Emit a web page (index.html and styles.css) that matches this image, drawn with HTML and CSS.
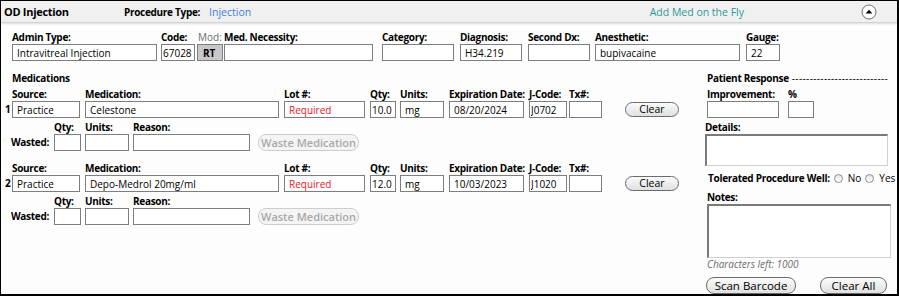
FILE: index.html
```html
<!DOCTYPE html>
<html lang="en">
<head>
    <meta charset="UTF-8">
    <title>OD Injection</title>
    <link rel="stylesheet" href="styles.css">
</head>
<body>
    <div class="panel">
        <div class="panel-head">
            <span class="head-title">OD Injection</span>
            <span class="head-label">Procedure Type:</span>
            <span class="head-type">Injection</span>
            <span class="head-add">Add Med on the Fly</span>
            <button class="collapse-btn" title="Collapse">
                <svg width="16" height="16" viewBox="0 0 16 16">
                    <circle cx="8" cy="8" r="7" fill="#fff" stroke="#6f6f6f" stroke-width="1"/>
                    <path d="M4.6 9.6 L8 5.8 L11.4 9.6 Z" fill="#000"/>
                </svg>
            </button>
        </div>

        <div class="panel-body">
            <div class="top-row">
                <div class="field f-admin"><label>Admin Type:</label><input class="box" value="Intravitreal Injection"></div>
                <div class="field f-code"><label>Code:</label><input class="box tight" value="67028"></div>
                <div class="field f-mod"><label class="muted">Mod:</label><input class="box mod-box" value="RT"></div>
                <div class="field f-need"><label>Med. Necessity:</label><input class="box" value=""></div>
                <div class="field f-cat"><label>Category:</label><input class="box" value=""></div>
                <div class="field f-dx"><label>Diagnosis:</label><input class="box" value="H34.219"></div>
                <div class="field f-dx2"><label>Second Dx:</label><input class="box" value=""></div>
                <div class="field f-anes"><label>Anesthetic:</label><input class="box" value="bupivacaine"></div>
                <div class="field f-gauge"><label>Gauge:</label><input class="box" value="22"></div>
            </div>

            <div class="main">
                <div class="meds">
                    <div class="section-title">Medications</div>

                    <div class="med">
                        <div class="med-row">
                            <span class="med-num">1</span>
                            <div class="field m-src"><label>Source:</label><input class="box" value="Practice"></div>
                            <div class="field m-med"><label>Medication:</label><input class="box" value="Celestone"></div>
                            <div class="field m-lot"><label>Lot #:</label><input class="box required" value="Required"></div>
                            <div class="field m-qty"><label>Qty:</label><input class="box tight" value="10.0"></div>
                            <div class="field m-units"><label>Units:</label><input class="box" value="mg"></div>
                            <div class="field m-exp"><label>Expiration Date:</label><input class="box" value="08/20/2024"></div>
                            <div class="field m-jcode"><label>J-Code:</label><input class="box tight" value="J0702"></div>
                            <div class="field m-tx"><label>Tx#:</label><input class="box" value=""></div>
                            <button class="pill clear-btn">Clear</button>
                        </div>
                        <div class="waste-row">
                            <span class="waste-label">Wasted:</span>
                            <div class="field w-qty"><label>Qty:</label><input class="box" value=""></div>
                            <div class="field w-units"><label>Units:</label><input class="box" value=""></div>
                            <div class="field w-reason"><label>Reason:</label><input class="box" value=""></div>
                            <button class="pill waste-btn" disabled>Waste Medication</button>
                        </div>
                    </div>

                    <div class="med">
                        <div class="med-row">
                            <span class="med-num">2</span>
                            <div class="field m-src"><label>Source:</label><input class="box" value="Practice"></div>
                            <div class="field m-med"><label>Medication:</label><input class="box" value="Depo-Medrol 20mg/ml"></div>
                            <div class="field m-lot"><label>Lot #:</label><input class="box required" value="Required"></div>
                            <div class="field m-qty"><label>Qty:</label><input class="box tight" value="12.0"></div>
                            <div class="field m-units"><label>Units:</label><input class="box" value="mg"></div>
                            <div class="field m-exp"><label>Expiration Date:</label><input class="box" value="10/03/2023"></div>
                            <div class="field m-jcode"><label>J-Code:</label><input class="box tight" value="J1020"></div>
                            <div class="field m-tx"><label>Tx#:</label><input class="box" value=""></div>
                            <button class="pill clear-btn">Clear</button>
                        </div>
                        <div class="waste-row">
                            <span class="waste-label">Wasted:</span>
                            <div class="field w-qty"><label>Qty:</label><input class="box" value=""></div>
                            <div class="field w-units"><label>Units:</label><input class="box" value=""></div>
                            <div class="field w-reason"><label>Reason:</label><input class="box" value=""></div>
                            <button class="pill waste-btn" disabled>Waste Medication</button>
                        </div>
                    </div>
                </div>

                <div class="response">
                    <div class="resp-title">
                        <span class="resp-label">Patient Response</span>
                        <span class="dashes">---------------------------</span>
                    </div>
                    <div class="imp-row">
                        <div class="field r-imp"><label>Improvement:</label><input class="box" value=""></div>
                        <div class="field r-pct"><label>%</label><input class="box" value=""></div>
                    </div>
                    <div class="field r-details">
                        <label>Details:</label>
                        <textarea class="area details-area"></textarea>
                    </div>
                    <div class="tolerated">
                        <span class="tol-label">Tolerated Procedure Well:</span>
                        <span class="radio"></span><span class="radio-text">No</span>
                        <span class="radio"></span><span class="radio-text">Yes</span>
                    </div>
                    <div class="field r-notes">
                        <label>Notes:</label>
                        <textarea class="area notes-area"></textarea>
                    </div>
                    <div class="chars-left">Characters left: 1000</div>
                    <div class="resp-buttons">
                        <button class="pill big-btn scan-btn">Scan Barcode</button>
                        <button class="pill big-btn clear-all-btn">Clear All</button>
                    </div>
                </div>
            </div>
        </div>
    </div>
</body>
</html>
```

FILE: styles.css
```css
* {
    box-sizing: border-box;
}

body {
    margin: 0;
    font-family: "Open Sans", "Segoe UI", sans-serif;
    font-size: 10px;
    color: #000;
    background: #fff;
}

.panel {
    width: 899px;
    height: 296px;
    border: 1px solid #000;
    border-right-width: 2px;
    border-bottom-width: 2px;
    background: #fdfdfd;
    overflow: hidden;
}

/* bold captions are a touch narrower than Open Sans gives */
.head-label,
.field label,
.section-title,
.med-num,
.waste-label,
.resp-label,
.tol-label {
    font-weight: 700;
    letter-spacing: -0.3px;
}

/* header bar */
.panel-head {
    height: 22px;
    display: flex;
    align-items: center;
    padding-left: 3px;
    background: #f0f0f0;
    border-bottom: 1px solid #d2d2d2;
    box-shadow: 0 1px 2px rgba(0, 0, 0, 0.12);
}

.head-title {
    width: 120px;
    font-size: 11px;
    font-weight: 700;
    letter-spacing: -0.3px;
}

.head-label {
    margin-right: 9px;
}

.head-type {
    font-size: 10.5px;
    color: #3b7fdc;
}

.head-add {
    margin-left: auto;
    margin-right: 117px;
    font-size: 10.5px;
    color: #2a9898;
}

.collapse-btn {
    width: 16px;
    height: 16px;
    margin-right: 20px;
    padding: 0;
    border: none;
    background: none;
    display: flex;
}

/* form body */
.panel-body {
    padding: 8px 0 0 11px;
}

.top-row {
    display: flex;
}

.field {
    display: flex;
    flex-direction: column;
}

.field label {
    line-height: 13px;
    white-space: nowrap;
}

.field label.muted {
    font-weight: 400;
    letter-spacing: 0;
    color: #6a6a6a;
    padding-left: 1px;
}

.box {
    width: 100%;
    height: 17px;
    margin: 0;
    padding: 0 4px;
    border: 1px solid #7e7e7e;
    background: #fff;
    font: inherit;
    color: #000;
    outline: none;
}

.box.tight {
    padding: 0 1px;
}

.mod-box {
    background: #c8c8c8;
    font-weight: 700;
    padding: 0 5px;
}

.required {
    color: #e8141e;
}

.f-admin { width: 145px; }
.f-code { width: 34px; margin-left: 4px; }
.f-mod { width: 26px; margin-left: 2px; }
.f-need { width: 149px; margin-left: 1px; }
.f-cat { width: 72px; margin-left: 9px; }
.f-dx { width: 62px; margin-left: 6px; }
.f-dx2 { width: 62px; margin-left: 6px; }
.f-anes { width: 145px; margin-left: 5px; }
.f-gauge { width: 34px; margin-left: 6px; }

.main {
    display: flex;
    margin-top: 11px;
}

.meds {
    width: 693px;
}

.section-title {
    line-height: 13px;
}

/* medication rows */
.med-row,
.waste-row {
    display: flex;
    align-items: flex-end;
    margin-top: 3px;
}

.med + .med {
    margin-top: 11px;
}

.med-num {
    width: 12px;
    margin-left: -12px;
    padding-left: 5px;
    line-height: 17px;
}

.m-src { width: 68px; }
.m-med { width: 194px; margin-left: 5px; }
.m-lot { width: 81px; margin-left: 5px; }
.m-qty { width: 26px; margin-left: 5px; }
.m-units { width: 44px; margin-left: 4px; }
.m-exp { width: 75px; margin-left: 5px; }
.m-jcode { width: 38px; margin-left: 5px; }
.m-tx { width: 33px; margin-left: 2px; }

.waste-label {
    width: 38px;
    margin-left: -1px;
    line-height: 17px;
}

.w-qty { width: 27px; margin-left: 5px; }
.w-units { width: 44px; margin-left: 4px; }
.w-reason { width: 117px; margin-left: 4px; }

/* pill buttons */
.pill {
    height: 15px;
    padding: 0;
    border: 1px solid #6c6c6c;
    border-radius: 8px;
    background: linear-gradient(#fbfbfb, #e0e0e0);
    font-family: "Open Sans", "Segoe UI", sans-serif;
    font-size: 10.5px;
    line-height: 13px;
    color: #000;
}

.clear-btn {
    width: 54px;
    margin-left: 23px;
    margin-bottom: 1px;
}

.waste-btn {
    width: 101px;
    height: 17px;
    margin-left: 8px;
    font-size: 11px;
    font-weight: 600;
    color: #a9a9a9;
    border-color: #cdcdcd;
    background: #f4f4f4;
}

/* patient response column */
.response {
    width: 185px;
    padding-left: 2px;
}

.resp-title {
    display: flex;
    line-height: 13px;
    white-space: nowrap;
}

.dashes {
    padding-left: 3px;
    letter-spacing: 0.35px;
}

.imp-row {
    display: flex;
    margin-top: 3px;
}

.r-imp { width: 72px; }
.r-pct { width: 26px; margin-left: 9px; }

.r-details {
    width: 183px;
    margin-left: -2px;
    margin-top: 3px;
}

.area {
    margin: 0;
    padding: 2px 4px;
    resize: none;
    border: 1px solid #d0d0d0;
    border-top: 2px solid #7a7a7a;
    border-left: 2px solid #7a7a7a;
    background: #fff;
    font: inherit;
    outline: none;
}

.details-area {
    width: 183px;
    height: 32px;
}

.tolerated {
    display: flex;
    align-items: center;
    margin-top: 6px;
    line-height: 13px;
    white-space: nowrap;
}

.tol-label {
    margin-left: 1px;
}

.radio {
    flex-shrink: 0;
    width: 9px;
    height: 9px;
    margin-left: 4px;
    border: 1px solid #8d8d8d;
    border-radius: 50%;
    background: linear-gradient(#e4e4e4, #ffffff);
}

.radio-text {
    margin-left: 5px;
}

.r-notes {
    width: 184px;
    margin-top: 6px;
}

.notes-area {
    width: 184px;
    height: 54px;
}

.chars-left {
    line-height: 13px;
    font-style: italic;
    color: #6d6d6d;
}

.resp-buttons {
    display: flex;
    margin-top: 6px;
}

.big-btn {
    height: 17px;
    font-size: 11.5px;
    line-height: 15px;
}

.scan-btn {
    width: 90px;
    margin-left: -1px;
}

.clear-all-btn {
    width: 67px;
    margin-left: 24px;
}
```
